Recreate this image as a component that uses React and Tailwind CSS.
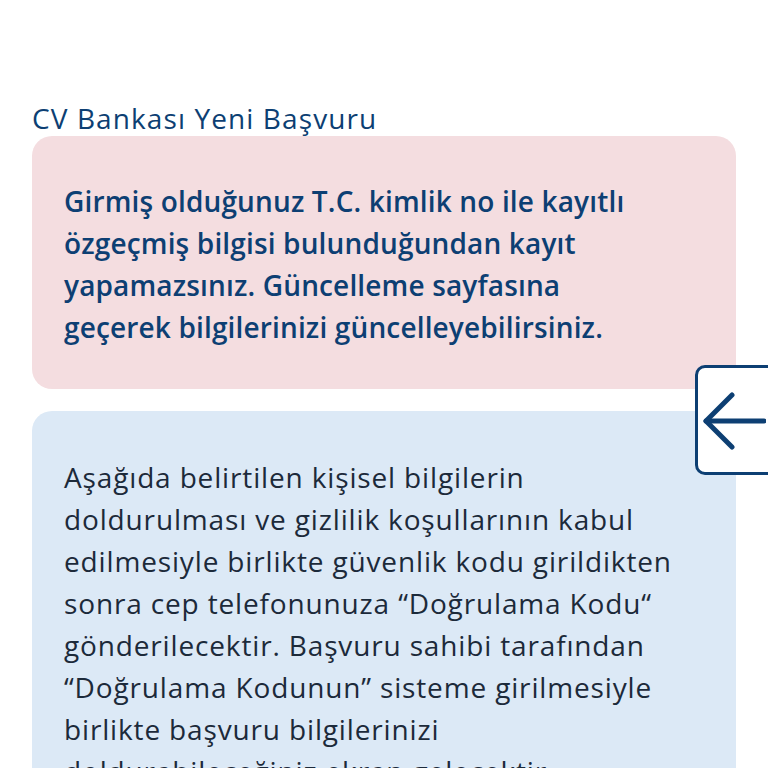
import React from 'react';

const font = { fontFamily: '"Open Sans", Lato, sans-serif' };

const alertLines = [
  'Girmiş olduğunuz T.C. kimlik no ile kayıtlı',
  'özgeçmiş bilgisi bulunduğundan kayıt',
  'yapamazsınız. Güncelleme sayfasına',
  'geçerek bilgilerinizi güncelleyebilirsiniz.',
];

const infoLines = [
  'Aşağıda belirtilen kişisel bilgilerin',
  'doldurulması ve gizlilik koşullarının kabul',
  'edilmesiyle birlikte güvenlik kodu girildikten',
  'sonra cep telefonunuza “Doğrulama Kodu“',
  'gönderilecektir. Başvuru sahibi tarafından',
  '“Doğrulama Kodunun” sisteme girilmesiyle',
  'birlikte başvuru bilgilerinizi',
  'doldurabileceğiniz ekran gelecektir.',
];

// Back button sticking out of the right edge
const BackTab = () => (
  <button className="absolute left-[695px] top-[365px] w-[90px] h-[110px] bg-white border-[3px] border-[#0d3f73] rounded-[10px] flex items-center pl-[4px]">
    <svg width="64" height="60" viewBox="0 0 64 60" fill="none" stroke="#0d3f73" strokeWidth="5" strokeLinecap="round" strokeLinejoin="round">
      <path d="M62 31H4" />
      <path d="M30 5L4 31l26 26" />
    </svg>
  </button>
);

export default function App() {
  return (
    <div className="relative w-[768px] h-[768px] overflow-hidden bg-white" style={font}>
      <div className="px-8 pt-[100px]">
        <h1 className="text-[28px] leading-[36px] font-medium tracking-[1.1px] text-[#0d3f73] whitespace-nowrap">CV Bankası Yeni Başvuru</h1>

        <div className="rounded-[20px] bg-[#f4dde0] px-8 pt-[44px] pb-[41px]">
          {alertLines.map((l) => (
            <p key={l} className="text-[28px] leading-[42px] font-semibold tracking-[0.15px] text-[#0d3f73] whitespace-nowrap">{l}</p>
          ))}
        </div>

        <div className="mt-[22px] rounded-[20px] bg-[#dce9f6] px-8 pt-[45px] pb-10">
          {infoLines.map((l) => (
            <p key={l} className="text-[28px] leading-[42px] tracking-[0.85px] text-[#1c2a3a] whitespace-nowrap">{l}</p>
          ))}
        </div>
      </div>
      <BackTab />
    </div>
  );
}
